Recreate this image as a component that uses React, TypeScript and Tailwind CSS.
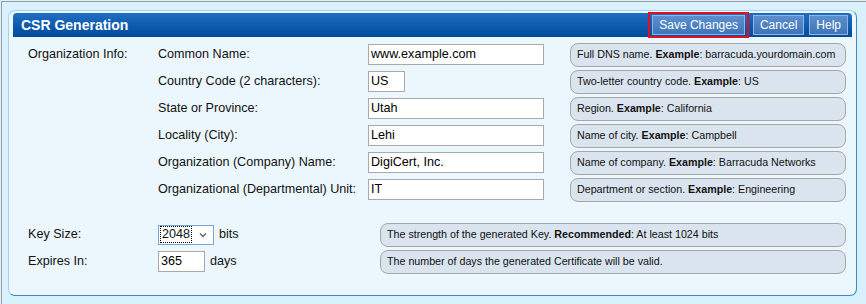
const orgRows = [
  { label: "Common Name:", value: "www.example.com", w: "w-[176px]", hint: "Full DNS name.", ex: "barracuda.yourdomain.com" },
  { label: "Country Code (2 characters):", value: "US", w: "w-[37px]", hint: "Two-letter country code.", ex: "US" },
  { label: "State or Province:", value: "Utah", w: "w-[176px]", hint: "Region.", ex: "California" },
  { label: "Locality (City):", value: "Lehi", w: "w-[176px]", hint: "Name of city.", ex: "Campbell" },
  { label: "Organization (Company) Name:", value: "DigiCert, Inc.", w: "w-[176px]", hint: "Name of company.", ex: "Barracuda Networks" },
  { label: "Organizational (Departmental) Unit:", value: "IT", w: "w-[176px]", hint: "Department or section.", ex: "Engineering" },
];

function Bubble({ children, className = "" }: { children: React.ReactNode; className?: string }) {
  return (
    <div
      className={`flex h-[24px] items-center rounded-[8px] border border-[#a7a7a7] bg-[#d9e4ee] pl-[6px] text-[10.7px] text-[#111] ${className}`}
    >
      <span>{children}</span>
    </div>
  );
}

function TextBox({ value, w }: { value: string; w: string }) {
  return (
    <div className={`flex h-[21px] items-center border border-[#a9a9a9] bg-white pl-[2px] text-[12.6px] text-black ${w}`}>
      {value}
    </div>
  );
}

function HeadButton({ children }: { children: React.ReactNode }) {
  return (
    <div className="flex h-[20px] items-center border border-[#8fb6e2] bg-gradient-to-b from-[#5b8fcf] to-[#3f74b8] px-[6px] text-[12px] text-white">
      {children}
    </div>
  );
}

export default function App() {
  return (
    <div className="h-[304px] w-[866px] bg-[#d8f1fc] pl-[1px] pt-[1px] font-['Liberation_Sans',Arial,sans-serif]">
      <div className="h-full border-l border-t border-[#9c9c9c] pl-[6px] pt-[8px]">
        <div className="h-[286px] w-[849px] rounded-[7px] border border-b-[#3f88c6] border-l-[#a9d0ec] border-r-[#3f88c6] border-t-[#a9d0ec] bg-[#ecf7fd] px-[4px] pt-[2px]">
          {/* header */}
          <div className="flex h-[24px] items-center justify-between rounded-t-[4px] bg-gradient-to-b from-[#1e6fc4] to-[#004b9b] pl-[8px] pr-[4px]">
            <span className="text-[14px] font-bold text-white">CSR Generation</span>
            <div className="flex items-center gap-[4px]">
              <div className="border-2 border-[#e3101c] px-[2px] py-[1px]">
                <HeadButton>Save Changes</HeadButton>
              </div>
              <HeadButton>Cancel</HeadButton>
              <div className="ml-[1px]">
                <HeadButton>Help</HeadButton>
              </div>
            </div>
          </div>

          {/* organization info */}
          <div className="mt-[4px] grid grid-cols-[130px_210px_202px_276px] pl-[15px] text-[12.6px] text-[#111]">
            {orgRows.map((r, i) => (
              <div key={r.label} className="contents">
                <div className="flex h-[27px] items-center">{i === 0 ? "Organization Info:" : ""}</div>
                <div className="flex h-[27px] items-center">{r.label}</div>
                <div className="flex h-[27px] items-center">
                  <TextBox value={r.value} w={r.w} />
                </div>
                <div className="flex h-[27px] items-center">
                  <Bubble className="w-full">
                    {r.hint} <b>Example</b>: {r.ex}
                  </Bubble>
                </div>
              </div>
            ))}
          </div>

          {/* key settings */}
          <div className="mt-[18px] grid grid-cols-[130px_222px_466px] pl-[15px] text-[12.6px] text-[#111]">
            <div className="flex h-[27px] items-center">Key Size:</div>
            <div className="flex h-[27px] items-center gap-[5px]">
              <div className="flex h-[20px] w-[56px] items-center border border-[#7ba4d6] bg-white pl-[1px]">
                <span className="border border-dotted border-black px-[1px] leading-[15px]">2048</span>
                <svg className="ml-[7px]" width="8" height="6" viewBox="0 0 8 6">
                  <path d="M1 1.5 L4 4.5 L7 1.5" fill="none" stroke="#666" strokeWidth="1.4" />
                </svg>
              </div>
              <span>bits</span>
            </div>
            <div className="flex h-[27px] items-center">
              <Bubble className="w-full">
                The strength of the generated Key. <b>Recommended</b>: At least 1024 bits
              </Bubble>
            </div>

            <div className="flex h-[27px] items-center">Expires In:</div>
            <div className="flex h-[27px] items-center gap-[5px]">
              <TextBox value="365" w="w-[47px]" />
              <span>days</span>
            </div>
            <div className="flex h-[27px] items-center">
              <Bubble className="w-full">The number of days the generated Certificate will be valid.</Bubble>
            </div>
          </div>
        </div>
      </div>
    </div>
  );
}
